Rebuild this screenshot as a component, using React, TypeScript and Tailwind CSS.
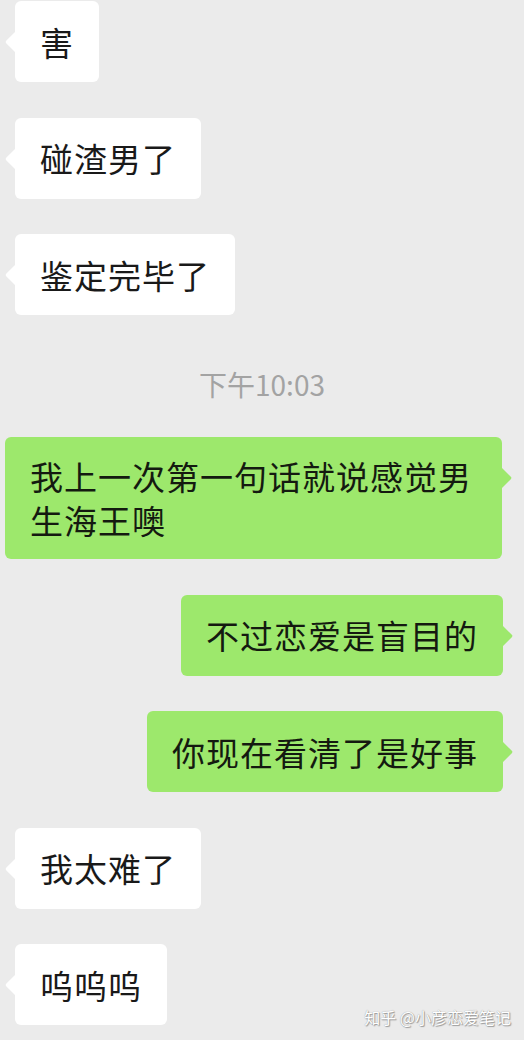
type Msg =
  | { kind: 'in'; text: string }
  | { kind: 'out'; text: string; wide?: boolean }
  | { kind: 'time'; text: string }

const messages: Msg[] = [
  { kind: 'in', text: '害' },
  { kind: 'in', text: '碰渣男了' },
  { kind: 'in', text: '鉴定完毕了' },
  { kind: 'time', text: '下午10:03' },
  { kind: 'out', text: '我上一次第一句话就说感觉男生海王噢', wide: true },
  { kind: 'out', text: '不过恋爱是盲目的' },
  { kind: 'out', text: '你现在看清了是好事' },
  { kind: 'in', text: '我太难了' },
  { kind: 'in', text: '呜呜呜' },
]

const font = { fontFamily: '"Noto Sans CJK SC", "Noto Sans", sans-serif' }

// Left bubble from the other person (white)
function InBubble({ text }: { text: string }) {
  return (
    <div className="flex justify-start pl-[15px]">
      <div className="relative flex min-h-[81px] items-center rounded-[6px] bg-white px-[25px] py-[17px] text-[33px] leading-[44px] tracking-[1px] text-[#191919]">
        <svg className="absolute left-[-10px] top-[31px]" width="10" height="20" viewBox="0 0 10 20">
          <path d="M10 0 L1.2 8.8 Q0 10 1.2 11.2 L10 20 Z" fill="#ffffff" />
        </svg>
        {text}
      </div>
    </div>
  )
}

// Right bubble from me (green)
function OutBubble({ text, wide }: { text: string; wide?: boolean }) {
  return (
    <div className={wide ? 'flex justify-start pl-[5px]' : 'flex justify-end pr-[21px]'}>
      <div className="relative flex min-h-[81px] max-w-[497px] items-center rounded-[6px] bg-[#9de86c] px-[25px] py-[17px] text-[33px] leading-[44px] tracking-[1px] text-[#141a10]">
        <svg className="absolute right-[-10px] top-[31px]" width="10" height="20" viewBox="0 0 10 20">
          <path d="M0 0 L8.8 8.8 Q10 10 8.8 11.2 L0 20 Z" fill="#9de86c" />
        </svg>
        {text}
      </div>
    </div>
  )
}

export default function App() {
  return (
    <div className="relative h-[1040px] w-[524px] overflow-hidden bg-[#ebebeb]" style={font}>
      <div className="flex flex-col gap-[35.5px] pt-[1px]">
        {messages.map((m, i) => {
          if (m.kind === 'time') {
            return (
              <div key={i} className="mt-[15px] text-center text-[28px] leading-[36px] text-[#a3a3a3]">
                {m.text}
              </div>
            )
          }
          if (m.kind === 'in') return <InBubble key={i} text={m.text} />
          return <OutBubble key={i} text={m.text} wide={m.wide} />
        })}
      </div>

      {/* Watermark */}
      <div className="absolute bottom-[13px] right-[13px] text-[16px] leading-[20px] text-white [text-shadow:0_0_1px_#8a8a8a,1px_1px_1px_#9a9a9a]">
        知乎 @小彦恋爱笔记
      </div>
    </div>
  )
}
